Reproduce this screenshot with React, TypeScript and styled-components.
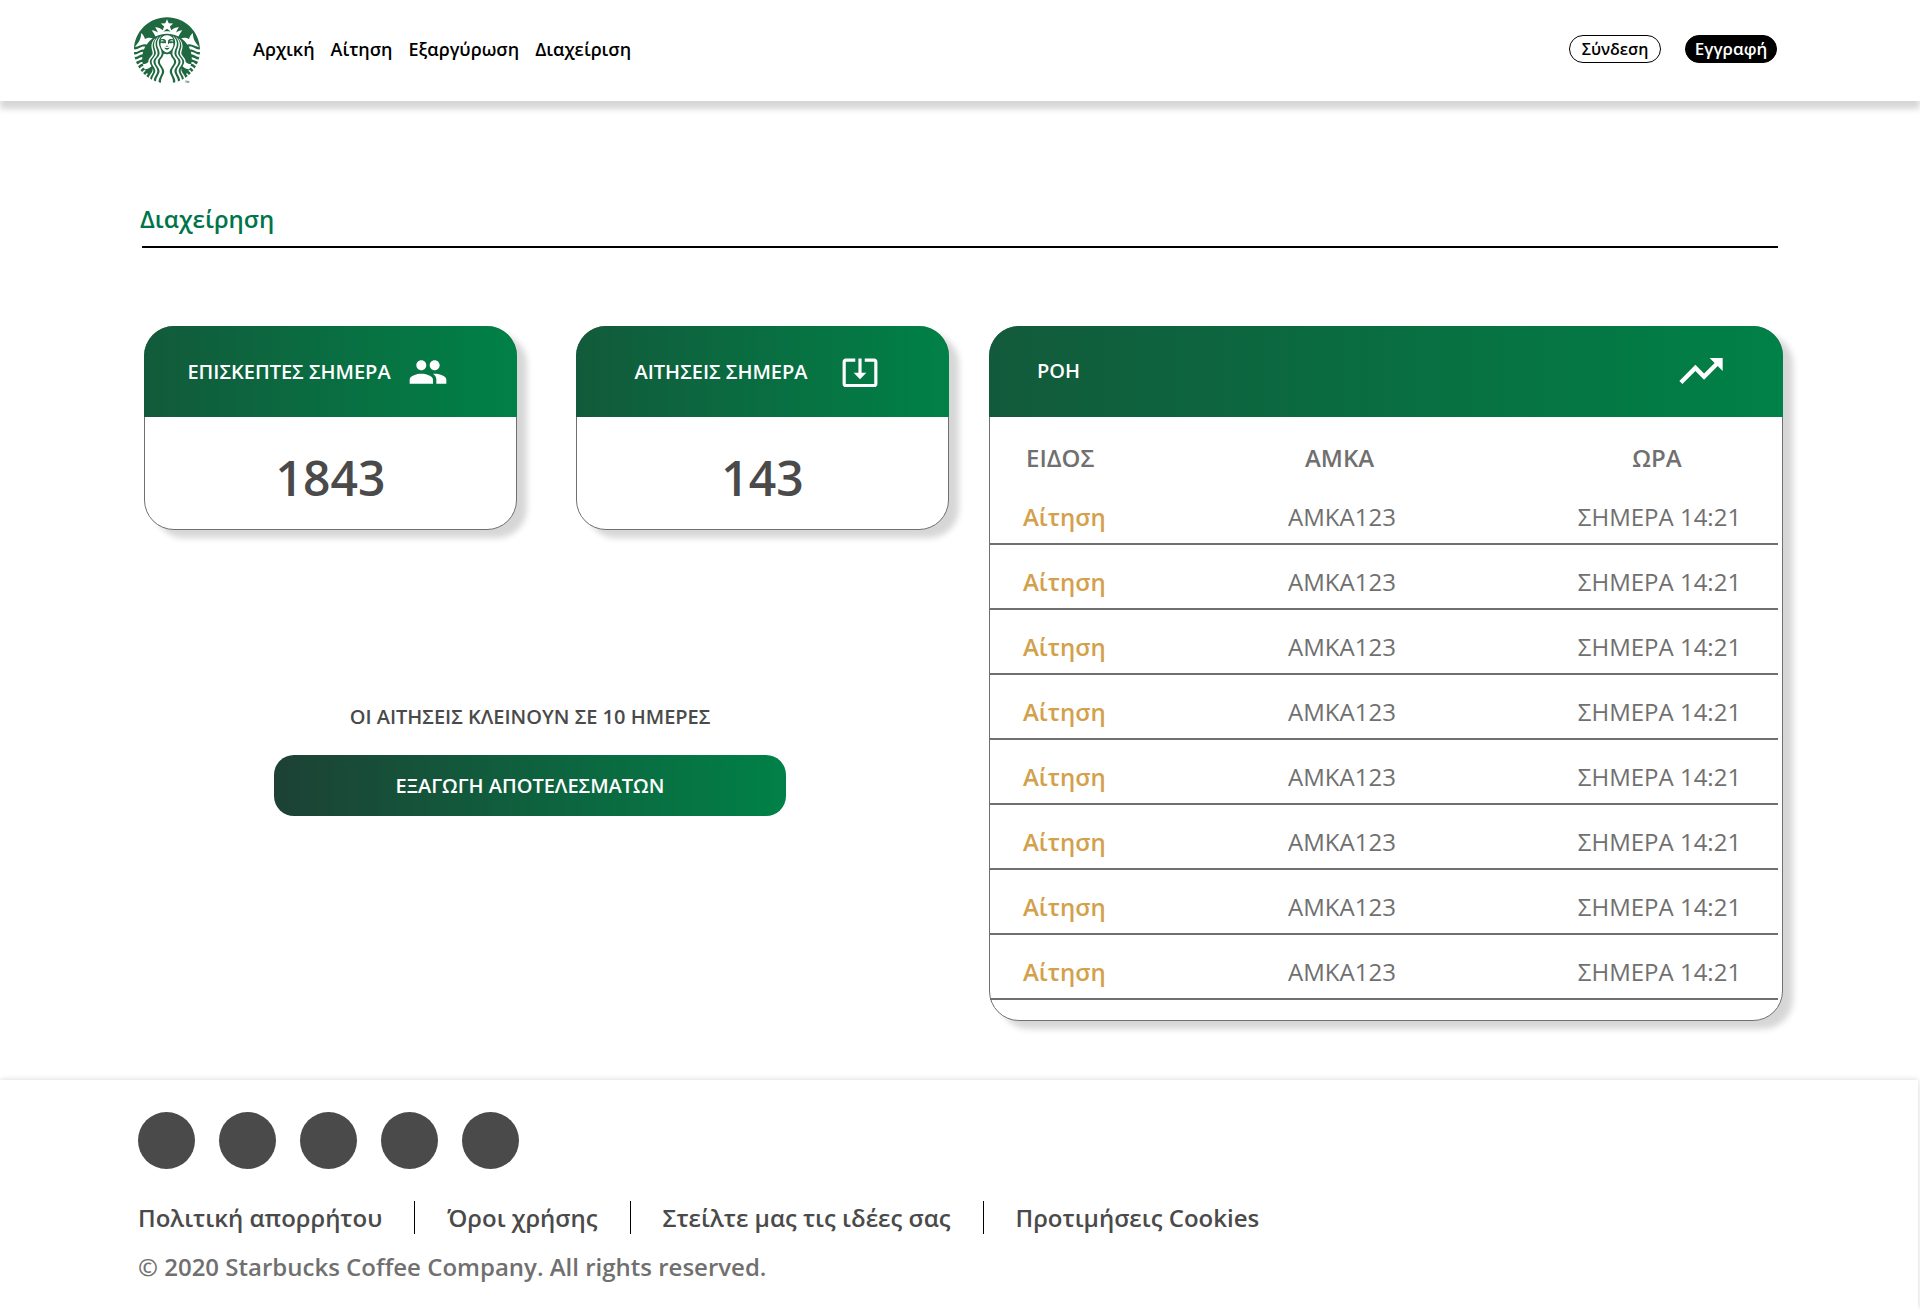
import React from "react";
import styled, { createGlobalStyle } from "styled-components";
import { MdPeople, MdSystemUpdateAlt, MdTrendingUp } from "react-icons/md";
import { SiStarbucks } from "react-icons/si";

const GlobalStyle = createGlobalStyle`
  *, *::before, *::after { box-sizing: border-box; }
  body {
    margin: 0;
    background: #fff;
    color: #000;
    font-family: "Open Sans", "Noto Sans", sans-serif;
    font-weight: 600;
    overflow-x: hidden;
  }
  a { color: inherit; text-decoration: none; }
  button { font-family: inherit; cursor: pointer; }
`;

const GREEN_END = "#008147";

const Header = styled.header`
  display: flex;
  align-items: center;
  padding: 17px 143px 18px 134px;
  box-shadow: 0 8px 6px rgba(0, 0, 0, 0.16);
`;

const Logo = styled.a`
  position: relative;
  display: flex;
  margin-right: 53px;
  color: #1f6840;
`;

const Trademark = styled.span`
  position: absolute;
  top: 63px;
  left: 51px;
  font-size: 6px;
  line-height: 6px;
`;

const Nav = styled.nav`
  display: flex;
  flex: 1;
  gap: 16px;
  padding-bottom: 2px;
  font-size: 18px;
  line-height: 24px;
`;

const Actions = styled.div`
  display: flex;
  gap: 24px;
  padding-bottom: 2px;
`;

const PillButton = styled.button<{ $filled?: boolean }>`
  height: 28px;
  min-width: 92px;
  padding: 0 8px;
  border: 1px solid #000;
  border-radius: 14px;
  background: ${(p) => (p.$filled ? "#000" : "#fff")};
  color: ${(p) => (p.$filled ? "#fff" : "#000")};
  font-size: ${(p) => (p.$filled ? "17px" : "16px")};
  line-height: 24px;
  font-weight: 600;
`;

const Main = styled.main`
  padding: 102px 137px 59px 140px;
`;

const Title = styled.h1`
  margin: 0;
  color: #00754a;
  font-size: 24px;
  line-height: 32px;
  font-weight: 600;
`;

const Rule = styled.hr`
  height: 2px;
  margin: 11px 5px 78px 2px;
  border: 0;
  background: #000;
`;

const Dashboard = styled.div`
  display: grid;
  grid-template-columns: minmax(0, 805fr) minmax(0, 794fr);
  gap: 40px;
  margin-left: 4px;
`;

const Stats = styled.div`
  display: grid;
  grid-template-columns: 1fr 1fr;
  gap: 59px;
`;

const Card = styled.section`
  border: 1px solid #707070;
  border-radius: 30px;
  background: #fff;
  box-shadow: 10px 8px 6px rgba(0, 0, 0, 0.16);
`;

const CardHeader = styled.header<{ $wide?: boolean }>`
  display: flex;
  align-items: center;
  justify-content: space-between;
  height: 91px;
  margin: -1px -1px 0;
  padding: ${(p) => (p.$wide ? "0 56px 2px 48px" : "0 69px 0 26px")};
  border-radius: 30px 30px 0 0;
  background: linear-gradient(90deg, #125a3b, ${GREEN_END});
  color: #fff;
`;

const CardTitle = styled.h2<{ $centered?: boolean }>`
  flex: 1;
  margin: 0;
  font-size: 20px;
  line-height: 28px;
  font-weight: 600;
  text-align: ${(p) => (p.$centered ? "center" : "left")};
`;

const IconSlot = styled.span`
  display: flex;
  justify-content: center;
  min-width: 40px;
`;

const StatValue = styled.p`
  margin: 0;
  padding: 29px 0 19px;
  color: #4a4a4a;
  font-size: 48px;
  line-height: 64px;
  text-align: center;
`;

const ExportPanel = styled.div`
  display: flex;
  flex-direction: column;
  align-items: center;
  gap: 24px;
  margin-top: 173px;
  padding-right: 33px;
`;

const Deadline = styled.p`
  margin: 0;
  color: #4a4a4a;
  font-size: 20px;
  line-height: 28px;
`;

const ExportButton = styled.button`
  width: 100%;
  max-width: 512px;
  height: 61px;
  border: 0;
  border-radius: 20px;
  background: linear-gradient(90deg, #1d4135, ${GREEN_END});
  color: #fff;
  font-size: 20px;
  line-height: 28px;
  font-weight: 600;
`;

const FlowTable = styled.table`
  width: calc(100% - 4px);
  margin-bottom: 20px;
  border-spacing: 0;
  table-layout: fixed;
  color: #707070;
  font-size: 24px;
  line-height: 32px;
`;

const KindCol = styled.col`
  width: 153px;
`;

const TimeCol = styled.col`
  width: 240px;
`;

const HeadCell = styled.th<{ $first?: boolean }>`
  padding: 25px 2px 6px ${(p) => (p.$first ? "36px" : "0")};
  font-weight: 600;
  text-align: ${(p) => (p.$first ? "left" : "center")};
`;

const Cell = styled.td`
  padding: 21px 0 10px 3px;
  border-bottom: 2px solid #707070;
  font-weight: 400;
  text-align: center;
`;

const KindCell = styled(Cell)`
  padding-left: 33px;
  color: #d3a04b;
  font-weight: 600;
  text-align: left;
`;

const Footer = styled.footer`
  margin-right: 2px;
  padding: 32px 138px 26px;
  background: #fff;
  box-shadow: 0 0 6px rgba(0, 0, 0, 0.16);
  font-size: 24px;
  line-height: 32px;
`;

const Socials = styled.div`
  display: flex;
  gap: 24px;
`;

const SocialLink = styled.a`
  width: 57px;
  height: 57px;
  border-radius: 50%;
  background: #4a4a4a;
`;

const FooterNav = styled.nav`
  display: flex;
  margin: 32px 0 17px;
  color: #4a4a4a;
  line-height: 33px;
`;

const FooterLink = styled.a`
  padding-right: 32px;

  & + & {
    padding-left: 32px;
    border-left: 1px solid #000;
  }
`;

const Copyright = styled.p`
  margin: 0;
  color: #707070;
`;

const navLinks = ["Αρχική", "Αίτηση", "Εξαργύρωση", "Διαχείριση"];
const footerLinks = ["Πολιτική απορρήτου", "Όροι χρήσης", "Στείλτε μας τις ιδέες σας", "Προτιμήσεις Cookies"];
const socials = ["Facebook", "Instagram", "Twitter", "YouTube", "Pinterest"];
const stats = [
  { label: "ΕΠΙΣΚΕΠΤΕΣ ΣΗΜΕΡΑ", value: "1843", icon: <MdPeople size={40} /> },
  { label: "ΑΙΤΗΣΕΙΣ ΣΗΜΕΡΑ", value: "143", icon: <MdSystemUpdateAlt size={38} /> },
];
const rows = Array.from({ length: 8 }, () => ({ kind: "Αίτηση", amka: "ΑΜΚΑ123", time: "ΣΗΜΕΡΑ 14:21" }));

export default function App() {
  return (
    <>
      <GlobalStyle />
      <Header>
        <Logo href="#" aria-label="Starbucks">
          <SiStarbucks size={66} />
          <Trademark>™</Trademark>
        </Logo>
        <Nav>
          {navLinks.map((label) => (
            <a href="#" key={label}>{label}</a>
          ))}
        </Nav>
        <Actions>
          <PillButton type="button">Σύνδεση</PillButton>
          <PillButton type="button" $filled>Εγγραφή</PillButton>
        </Actions>
      </Header>

      <Main>
        <Title>Διαχείρηση</Title>
        <Rule />
        <Dashboard>
          <div>
            <Stats>
              {stats.map((s) => (
                <Card key={s.label}>
                  <CardHeader>
                    <CardTitle $centered>{s.label}</CardTitle>
                    <IconSlot>{s.icon}</IconSlot>
                  </CardHeader>
                  <StatValue>{s.value}</StatValue>
                </Card>
              ))}
            </Stats>
            <ExportPanel>
              <Deadline>ΟΙ ΑΙΤΗΣΕΙΣ ΚΛΕΙΝΟΥΝ ΣΕ 10 ΗΜΕΡΕΣ</Deadline>
              <ExportButton type="button">ΕΞΑΓΩΓΗ ΑΠΟΤΕΛΕΣΜΑΤΩΝ</ExportButton>
            </ExportPanel>
          </div>

          <Card>
            <CardHeader $wide>
              <CardTitle>ΡΟΗ</CardTitle>
              <MdTrendingUp size={52} />
            </CardHeader>
            <FlowTable>
              <colgroup>
                <KindCol />
                <col />
                <TimeCol />
              </colgroup>
              <thead>
                <tr>
                  <HeadCell scope="col" $first>ΕΙΔΟΣ</HeadCell>
                  <HeadCell scope="col">ΑΜΚΑ</HeadCell>
                  <HeadCell scope="col">ΩΡΑ</HeadCell>
                </tr>
              </thead>
              <tbody>
                {rows.map((r, i) => (
                  <tr key={i}>
                    <KindCell>{r.kind}</KindCell>
                    <Cell>{r.amka}</Cell>
                    <Cell>{r.time}</Cell>
                  </tr>
                ))}
              </tbody>
            </FlowTable>
          </Card>
        </Dashboard>
      </Main>

      <Footer>
        <Socials>
          {socials.map((name) => (
            <SocialLink href="#" key={name} aria-label={name} />
          ))}
        </Socials>
        <FooterNav>
          {footerLinks.map((label) => (
            <FooterLink href="#" key={label}>{label}</FooterLink>
          ))}
        </FooterNav>
        <Copyright>© 2020 Starbucks Coffee Company. All rights reserved.</Copyright>
      </Footer>
    </>
  );
}
